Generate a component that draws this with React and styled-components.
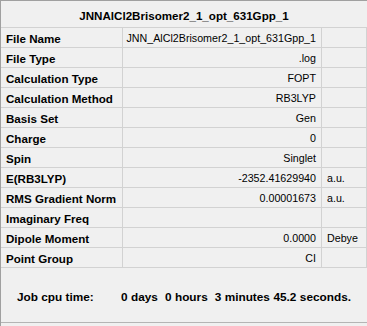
import React from "react";
import styled, { createGlobalStyle } from "styled-components";

const Global = createGlobalStyle`
  html, body { margin: 0; padding: 0; background: #f0f0f0; }
  body { font-family: "Liberation Sans", Arial, sans-serif; }
`;

const Panel = styled.div`
  width: 367px;
  height: 326px;
  box-sizing: border-box;
  background: #f0f0f0;
  border-top: 1px solid #a0a0a0;
  border-left: 1px solid #a0a0a0;
  display: flex;
  flex-direction: column;
  overflow: hidden;
`;

const Title = styled.div`
  height: 27px;
  box-sizing: border-box;
  border-bottom: 1px solid #d2d2d2;
  display: flex;
  align-items: center;
  justify-content: center;
  font-weight: bold;
  font-size: 11.6px;
  color: #000;
  padding-top: 3px;
`;

const Grid = styled.div`
  display: grid;
  grid-template-columns: 122px 199px 1fr;
  grid-auto-rows: 20px;
`;

const Cell = styled.div`
  box-sizing: border-box;
  border-right: 1px solid #d2d2d2;
  border-bottom: 1px solid #d2d2d2;
  display: flex;
  align-items: center;
  padding: 1px 5px 0;
  color: #000;
  white-space: nowrap;
  justify-content: ${(p) => (p.$align === "right" ? "flex-end" : "flex-start")};
  font-weight: ${(p) => (p.$bold ? "bold" : "normal")};
  font-size: ${(p) => (p.$bold ? "11.6px" : "10.7px")};
`;

const Footer = styled.div`
  height: 55px;
  box-sizing: border-box;
  border-bottom: 1px solid #b4b4b4;
  display: flex;
  align-items: center;
  padding: 4px 0 0 16px;
  font-size: 11.8px;
  font-weight: bold;
  color: #000;
  white-space: pre;
`;

const FooterLabel = styled.span`
  width: 104px;
`;

const FooterValue = styled.span`
  word-spacing: 0.2px;
`;

const rows = [
  ["File Name", "JNN_AlCl2Brisomer2_1_opt_631Gpp_1", ""],
  ["File Type", ".log", ""],
  ["Calculation Type", "FOPT", ""],
  ["Calculation Method", "RB3LYP", ""],
  ["Basis Set", "Gen", ""],
  ["Charge", "0", ""],
  ["Spin", "Singlet", ""],
  ["E(RB3LYP)", "-2352.41629940", "a.u."],
  ["RMS Gradient Norm", "0.00001673", "a.u."],
  ["Imaginary Freq", "", ""],
  ["Dipole Moment", "0.0000", "Debye"],
  ["Point Group", "CI", ""],
];

export default function App() {
  return (
    <>
      <Global />
      <Panel>
        <Title>JNNAlCl2Brisomer2_1_opt_631Gpp_1</Title>
        <Grid>
          {rows.map(([label, value, unit]) => (
            <React.Fragment key={label}>
              <Cell $bold>{label}</Cell>
              <Cell $align="right">{value}</Cell>
              <Cell>{unit}</Cell>
            </React.Fragment>
          ))}
        </Grid>
        <Footer>
          <FooterLabel>Job cpu time:</FooterLabel>
          <FooterValue>0 days  0 hours  3 minutes 45.2 seconds.</FooterValue>
        </Footer>
      </Panel>
    </>
  );
}
